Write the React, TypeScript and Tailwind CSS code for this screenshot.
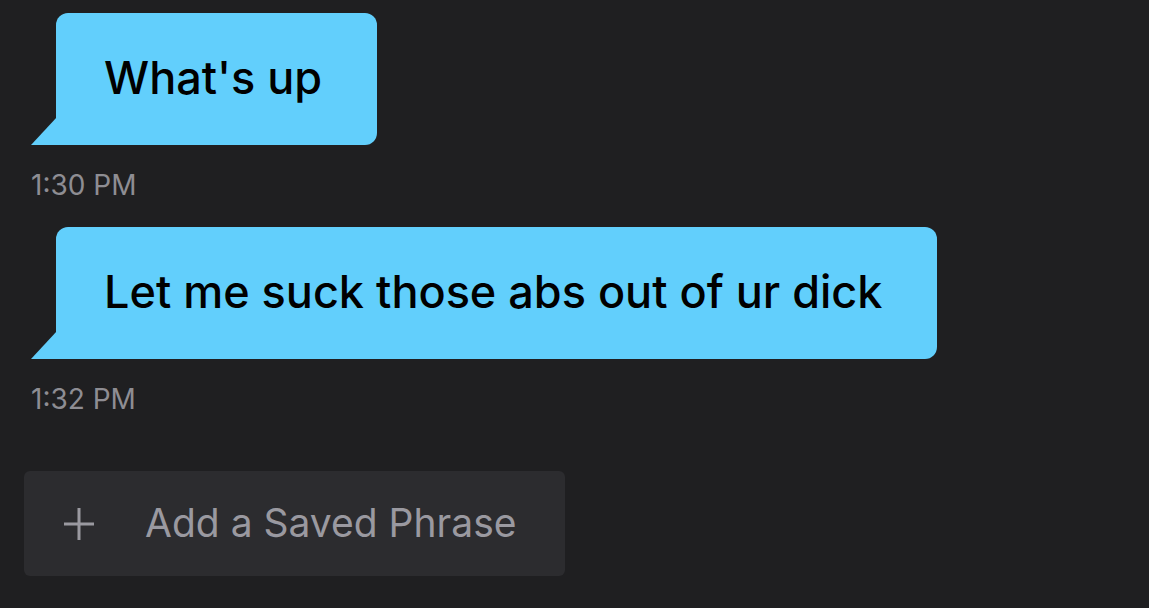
export default function App() {
  const messages = [
    { text: "What's up", time: "1:30 PM" },
    { text: "Let me suck those abs out of ur dick", time: "1:32 PM" },
  ]

  return (
    <div
      className="w-full h-[608px] overflow-hidden bg-[#1f1f21] pt-[13px]"
      style={{ fontFamily: "Inter, 'Noto Sans', sans-serif" }}
    >
      <div className="flex flex-col pl-[31px]">
        {messages.map((m) => (
          <div key={m.time} className="flex flex-col items-start mb-[27px]">
            <div className="relative ml-[25px]">
              <svg
                className="absolute -left-[25px] bottom-0"
                width="26"
                height="28"
                viewBox="0 0 26 28"
              >
                <path d="M0 28 L26 0 L26 28 Z" fill="#62cffc" />
              </svg>
              <div className="h-[132px] flex items-center pl-12 pr-[55px] pb-[3px] bg-[#62cffc] rounded-[12px] rounded-bl-none text-[45px] font-medium text-black">
                {m.text}
              </div>
            </div>
            <div className="mt-[25px] text-[28px] leading-[30px] text-[#8e8d93]">{m.time}</div>
          </div>
        ))}
      </div>
      <div className="pl-6 mt-[30px]">
        <button className="w-[541px] h-[105px] flex items-center bg-[#2c2c2f] rounded-[6px] pl-[39px]">
          <svg width="32" height="34" viewBox="0 0 32 34" className="shrink-0">
            <path d="M16 1 V33 M1 17 H31" stroke="#9a99a0" strokeWidth="3" />
          </svg>
          <span className="ml-[50px] text-[39px] text-[#9a99a0]">Add a Saved Phrase</span>
        </button>
      </div>
    </div>
  )
}
